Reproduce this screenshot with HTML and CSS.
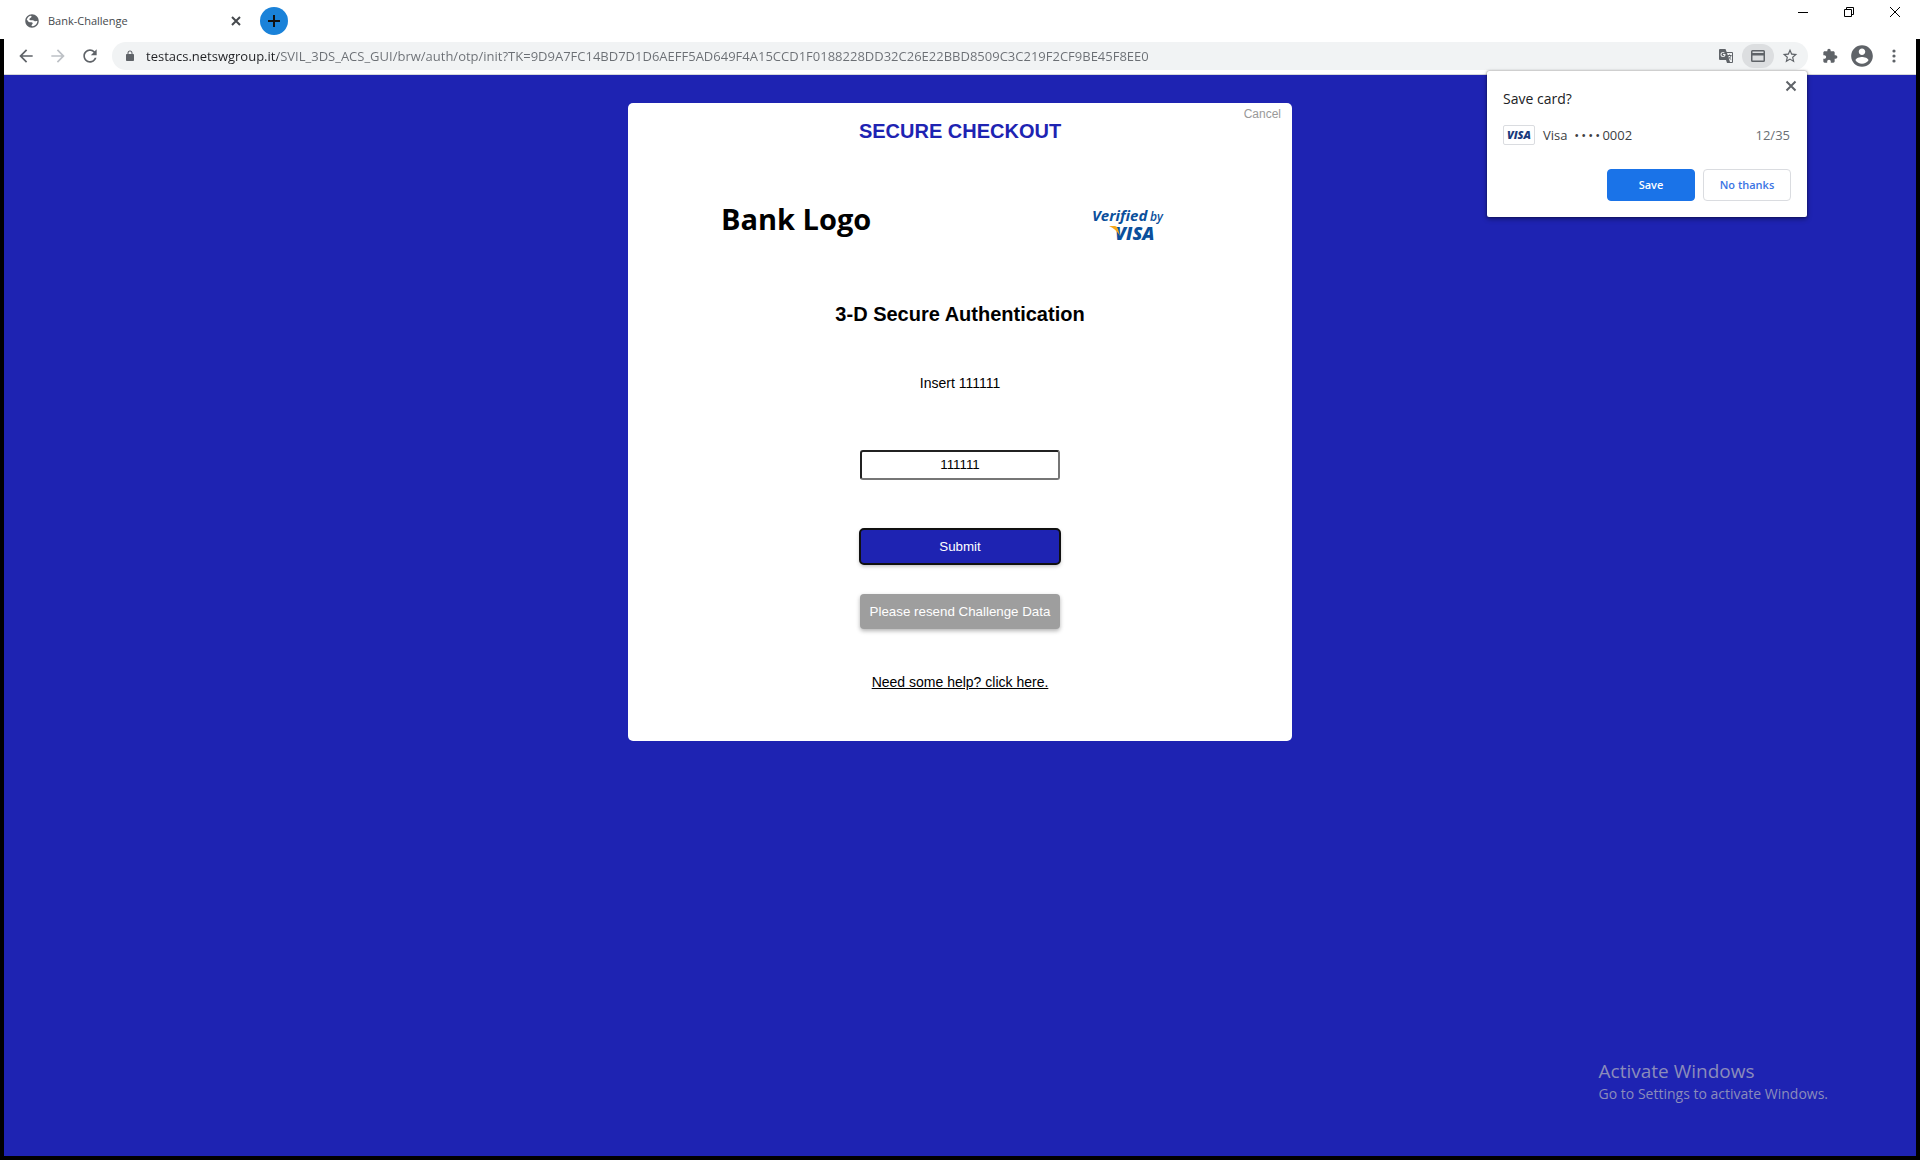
FILE: index.html
```html
<!DOCTYPE html>
<html lang="en">
<head>
<meta charset="utf-8">
<title>Bank-Challenge</title>
<link rel="stylesheet" href="styles.css">
</head>
<body>
<header class="browser">
  <div class="tabstrip">
    <div class="tab">
      <svg class="i18 grey" viewBox="0 0 24 24"><path d="M12 3C7 3 3 7 3 12s4 9 9 9 9-4 9-9-4-9-9-9zM5 10.500C5.600 7.700 7.500 5.700 10.200 5c1.500.3 1.600 1.300.8 2.100L9 8.700c-1 .8-.5 2.300 1 2.300h3c1.500 0 2.200 1.400 3.500 1.400 1.300 0 2.300-.6 2.700 0-.3 3.300-2.700 6-5.900 6.700-2.300.3-2.500-1.500-1-2.600 1.200-1 .6-2.700-1-2.700H9c-1.700 0-2.200-1.900-4-3.300z"/></svg>
      <span class="tab-title">Bank-Challenge</span>
      <button class="icon-btn" aria-label="Close tab"><svg class="i10" viewBox="0 0 10 10"><path class="line dark" d="M1 1l8 8M9 1l-8 8"/></svg></button>
    </div>
    <button class="new-tab" aria-label="New tab"><svg class="i12" viewBox="0 0 12 12"><path class="line" d="M6 0v12M0 6h12"/></svg></button>
    <div class="window-controls">
      <button class="icon-btn" aria-label="Minimize"><svg class="i10" viewBox="0 0 10 10"><path class="thin" d="M0 5.500h10"/></svg></button>
      <button class="icon-btn" aria-label="Restore"><svg class="i10" viewBox="0 0 10 10"><path class="thin" d="M.5 2.500h7v7h-7zM2.500 2.500v-2h7v7h-2"/></svg></button>
      <button class="icon-btn" aria-label="Close"><svg class="i10" viewBox="0 0 10 10"><path class="thin" d="M0 0l10 10M10 0L0 10"/></svg></button>
    </div>
  </div>
  <div class="toolbar">
    <div class="nav">
      <button class="icon-btn" aria-label="Back"><svg class="i20" viewBox="0 0 24 24"><path d="M20 11H7.830l5.590-5.590L12 4l-8 8 8 8 1.410-1.410L7.830 13H20v-2z"/></svg></button>
      <button class="icon-btn faded" aria-label="Forward"><svg class="i20" viewBox="0 0 24 24"><path d="M12 4l-1.410 1.410L16.170 11H4v2h12.170l-5.580 5.590L12 20l8-8z"/></svg></button>
      <button class="icon-btn" aria-label="Reload"><svg class="i20" viewBox="0 0 24 24"><path d="M17.650 6.350C16.200 4.900 14.210 4 12 4c-4.420 0-7.990 3.580-7.990 8s3.570 8 7.990 8c3.730 0 6.840-2.550 7.730-6h-2.080c-.82 2.330-3.040 4-5.650 4-3.310 0-6-2.690-6-6s2.690-6 6-6c1.660 0 3.140.69 4.220 1.780L13 11h7V4l-2.350 2.350z"/></svg></button>
    </div>
    <div class="omnibox">
      <svg class="i12" viewBox="0 0 24 24"><path d="M18 8h-1V6c0-2.760-2.240-5-5-5S7 3.240 7 6v2H6c-1.100 0-2 .9-2 2v10c0 1.100.9 2 2 2h12c1.100 0 2-.9 2-2V10c0-1.100-.9-2-2-2zM9 6c0-1.660 1.340-3 3-3s3 1.340 3 3v2H9V6z"/></svg>
      <input class="url" type="text" aria-label="Address" value="testacs.netswgroup.it/SVIL_3DS_ACS_GUI/brw/auth/otp/init?TK=9D9A7FC14BD7D1D6AEFF5AD649F4A15CCD1F0188228DD32C26E22BBD8509C3C219F2CF9BE45F8EE0">
      <button class="chip" aria-label="Translate"><svg class="i16" viewBox="0 0 16 16"><path d="M2 1h5.500l1.200 3H14a1 1 0 0 1 1 1v9a1 1 0 0 1-1 1H9l-1-3H2a1 1 0 0 1-1-1V2a1 1 0 0 1 1-1zm7 4l3 9h2V5zM5 4a2.500 2.500 0 1 0 2.500 2.500V6H5v1h1.400A1.500 1.500 0 1 1 6 5.400l.7-.7A2.500 2.500 0 0 0 5 4z" fill-rule="evenodd"/><path class="hair" d="M9.500 7.500h4M11.500 6.500v1M13 7.500c-.3 1.500-1.200 2.500-2.500 3.500M10.500 8.500c.8 1.500 1.600 2.300 2.700 3"/></svg></button>
      <button class="chip active" aria-label="Save card"><svg class="i16" viewBox="0 0 16 16"><path d="M2.500 2h11A1.500 1.500 0 0 1 15 3.500v9a1.500 1.500 0 0 1-1.500 1.500h-11A1.500 1.500 0 0 1 1 12.500v-9A1.500 1.500 0 0 1 2.500 2zm0 1.500V5h11V3.500zm0 4v5h11v-5z" fill-rule="evenodd"/></svg></button>
      <button class="chip" aria-label="Bookmark"><svg class="i16" viewBox="1 1 22 22"><path d="M22 9.240l-7.190-.62L12 2 9.190 8.630 2 9.240l5.460 4.730L5.820 21 12 17.270 18.180 21l-1.630-7.030L22 9.240zM12 15.400l-3.760 2.270 1-4.280-3.320-2.880 4.380-.38L12 6.100l1.710 4.040 4.380.38-3.320 2.880 1 4.280L12 15.400z"/></svg></button>
    </div>
    <div class="tools">
      <button class="icon-btn" aria-label="Extensions"><svg class="i16" viewBox="0 0 24 24"><path d="M20.500 11H19V7c0-1.100-.9-2-2-2h-4V3.500C13 2.120 11.880 1 10.500 1S8 2.120 8 3.500V5H4c-1.100 0-1.990.9-1.990 2v3.800H3.500c1.490 0 2.700 1.210 2.700 2.700s-1.210 2.700-2.700 2.700H2V20c0 1.100.9 2 2 2h3.800v-1.500c0-1.490 1.210-2.700 2.700-2.700 1.490 0 2.700 1.210 2.700 2.700V22H17c1.100 0 2-.9 2-2v-4h1.500c1.380 0 2.500-1.120 2.500-2.500S21.880 11 20.500 11z"/></svg></button>
      <button class="icon-btn" aria-label="Profile"><svg class="i26" viewBox="0 0 24 24"><path d="M12 2C6.480 2 2 6.480 2 12s4.480 10 10 10 10-4.480 10-10S17.520 2 12 2zm0 3c1.660 0 3 1.340 3 3s-1.340 3-3 3-3-1.340-3-3 1.340-3 3-3zm0 14.200c-2.500 0-4.710-1.280-6-3.220.03-1.990 4-3.080 6-3.080 1.990 0 5.970 1.090 6 3.080-1.290 1.940-3.500 3.220-6 3.220z"/></svg></button>
      <button class="icon-btn" aria-label="Menu"><svg class="i16" viewBox="0 0 16 16"><circle cx="8" cy="3" r="1.600"/><circle cx="8" cy="8" r="1.600"/><circle cx="8" cy="13" r="1.600"/></svg></button>
    </div>
    <section class="popup" aria-label="Save card?">
      <button class="icon-btn popup-close" aria-label="Dismiss"><svg class="i12" viewBox="0 0 12 12"><path class="line mid" d="M1.500 1.500l9 9M10.500 1.500l-9 9"/></svg></button>
      <h2 class="popup-title">Save card?</h2>
      <div class="card-row">
        <span class="visa-badge">VISA</span>
        <span>Visa&nbsp; •&thinsp;•&thinsp;•&thinsp;•&thinsp;0002</span>
        <span class="expiry">12/35</span>
      </div>
      <div class="popup-actions">
        <button class="btn primary">Save</button>
        <button class="btn outline">No thanks</button>
      </div>
    </section>
  </div>
</header>
<main class="page">
  <form class="checkout">
    <a class="cancel" href="#">Cancel</a>
    <h1 class="heading brand">SECURE CHECKOUT</h1>
    <div class="logos">
      <span class="bank-logo">Bank Logo</span>
      <svg class="vbv" viewBox="0 0 76 46" role="img" aria-label="Verified by VISA">
        <text class="vbv-word" x="1" y="22">Verified</text>
        <text class="vbv-by" x="59" y="22">by</text>
        <text class="vbv-visa" x="24" y="41">VISA</text>
        <path class="vbv-flick" d="M18 27h6q2 0 3 3l2 7q-4-7-11-10z"/>
      </svg>
    </div>
    <h2 class="heading">3-D Secure Authentication</h2>
    <label class="message" for="otp">Insert 111111</label>
    <input class="otp" id="otp" type="text" value="111111">
    <button class="action submit" type="button">Submit</button>
    <button class="action resend" type="button">Please resend Challenge Data</button>
    <a class="help" href="#">Need some help? click here.</a>
  </form>
</main>
<aside class="watermark">
  <p class="wm-title">Activate Windows</p>
  <p class="wm-text">Go to Settings to activate Windows.</p>
</aside>
</body>
</html>
```
FILE: styles.css
```css
* { box-sizing: border-box; }
body {
  margin: 0;
  min-height: 100vh;
  display: flex;
  flex-direction: column;
  position: relative;
  background: #000;
  font-family: "Open Sans", "Noto Sans", sans-serif;
  color: #202124;
}
h1, h2, p { margin: 0; font-weight: normal; }
button { cursor: pointer; }
svg { display: block; flex: none; fill: currentColor; }

.i10 { width: 10px; height: 10px; }
.i12 { width: 12px; height: 12px; }
.i16 { width: 16px; height: 16px; }
.i18 { width: 18px; height: 18px; }
.i20 { width: 20px; height: 20px; }
.i26 { width: 26px; height: 26px; }
.grey { color: #5f6368; }
.line { fill: none; stroke: #111; stroke-width: 2; }
.dark { stroke: #45494d; }
.mid { stroke: #5f6368; }
.thin { fill: none; stroke: #000; }
.hair { fill: none; stroke: currentColor; }

.icon-btn {
  display: grid;
  place-items: center;
  padding: 0;
  border: 0;
  background: none;
  color: inherit;
}
.faded { color: #bdc1c6; }

/* Browser chrome */
.tabstrip {
  display: flex;
  align-items: flex-start;
  height: 39px;
  padding: 0 20px 0 23px;
  background: #fff;
}
.tab {
  display: flex;
  align-items: center;
  width: 218px;
  height: 42px;
  gap: 7px;
}
.tab-title { flex: 1; font-size: 11px; line-height: 16px; color: #45494d; }
.new-tab {
  display: grid;
  place-items: center;
  width: 28px;
  height: 28px;
  margin: 7px 0 0 19px;
  padding: 0;
  border: 0;
  border-radius: 50%;
  background: #1a82d9;
}
.window-controls {
  display: flex;
  gap: 36px;
  margin: 7px 0 0 auto;
}
.toolbar {
  position: relative;
  display: flex;
  align-items: center;
  height: 36px;
  margin: 0 4px;
  padding: 0 14px 1px 12px;
  border-bottom: 1px solid #d5d7da;
  background: #fff;
  color: #5f6368;
}
.nav { display: flex; gap: 12px; margin-right: 12px; }
.omnibox {
  flex: 1;
  display: flex;
  align-items: center;
  height: 28px;
  padding: 0 2px 0 12px;
  border-radius: 14px;
  background: #f1f3f4;
}
.url {
  flex: 1;
  min-width: 0;
  margin-left: 10px;
  padding: 0;
  border: 0;
  outline: 0;
  font: 13px/20px "Open Sans", "Noto Sans", sans-serif;
  color: transparent;
  background: linear-gradient(90deg, #202124 132px, #6b6f74 132px);
  -webkit-background-clip: text;
  background-clip: text;
}
.chip {
  display: grid;
  place-items: center;
  width: 32px;
  height: 24px;
  padding: 0;
  border: 0;
  border-radius: 12px;
  background: none;
  color: #5f6368;
}
.active { background: #dcdee0; }
.tools { display: flex; align-items: center; gap: 11px; margin-left: 14px; }

/* Save card bubble */
.popup {
  position: absolute;
  z-index: 2;
  top: 32px;
  right: 109px;
  width: 320px;
  padding: 16px;
  border-radius: 2px;
  background: #fff;
  color: #3c4043;
  box-shadow: 0 0 2px rgba(0, 0, 0, .5), 0 2px 5px rgba(0, 0, 0, .4);
}
.popup-close { position: absolute; top: 9px; right: 10px; }
.popup-title { font-size: 14px; line-height: 24px; color: #202124; }
.card-row {
  display: flex;
  align-items: center;
  gap: 8px;
  margin-top: 14px;
  font-size: 13px;
  line-height: 20px;
}
.visa-badge {
  width: 32px;
  height: 20px;
  border: 1px solid #dadce0;
  border-radius: 2px;
  font-size: 11px;
  line-height: 18px;
  font-weight: 800;
  font-style: italic;
  text-align: center;
  color: #1a3a7c;
}
.expiry { margin-left: auto; padding-right: 1px; color: #6b6f74; }
.popup-actions {
  display: flex;
  justify-content: flex-end;
  gap: 8px;
  margin-top: 24px;
}
.btn {
  width: 88px;
  height: 32px;
  padding: 0 0 1px;
  border: 1px solid #1a73e8;
  border-radius: 4px;
  font: 600 11px/16px "Open Sans", "Noto Sans", sans-serif;
}
.primary { background: #1a73e8; color: #fff; }
.outline { border-color: #dadce0; background: #fff; color: #3b74e4; }

/* Challenge page */
.page {
  flex: 1;
  margin: 0 4px 4px;
  padding: 28px 20px;
  background: #1e23b2;
  font-family: "Liberation Sans", Arial, sans-serif;
}
.checkout {
  position: relative;
  display: flex;
  flex-direction: column;
  align-items: center;
  max-width: 664px;
  margin: 0 auto;
  padding: 16px 24px 49px;
  border-radius: 5px;
  background: #fff;
  color: #000;
  font-size: 14px;
  line-height: 20px;
}
.cancel {
  position: absolute;
  top: 1px;
  right: 11px;
  font-size: 12px;
  color: #999;
  text-decoration: none;
}
.heading { font-size: 20px; line-height: 24px; font-weight: bold; }
.brand { color: #1e23b2; }
.logos {
  display: flex;
  justify-content: space-between;
  align-items: flex-start;
  align-self: stretch;
  margin: 56px 101px 57px 69px;
}
.bank-logo {
  font: bold 29px/40px "Open Sans", "Noto Sans", sans-serif;
}
.vbv {
  width: 76px;
  height: 46px;
  fill: #0a4f9c;
  font-family: "Open Sans", "Noto Sans", sans-serif;
  font-style: italic;
}
.vbv-word { font-size: 15px; font-weight: 700; }
.vbv-by { font-size: 12px; font-weight: 600; }
.vbv-visa { font-size: 18px; font-weight: 800; }
.vbv-flick { fill: #f7a81b; }
.message { margin: 47px 0 57px; }
.otp,
.action {
  width: 200px;
  font-family: "Liberation Sans", Arial, sans-serif;
}
.otp {
  height: 30px;
  margin-bottom: 49px;
  padding: 0 0 2px;
  border: 2px inset #767676;
  border-radius: 3px;
  text-align: center;
  color: #000;
}
.action {
  height: 35px;
  padding: 0;
  border: 0;
  border-radius: 4px;
  color: #fff;
  box-shadow: 0 2px 4px rgba(0, 0, 0, .3);
}
.submit {
  margin-bottom: 30px;
  background: #1e23b2;
  outline: 2px solid #101010;
  outline-offset: -1px;
}
.resend { margin-bottom: 43px; background: #9e9e9e; }
.help { color: #000; }

.watermark {
  position: absolute;
  right: 92px;
  bottom: 55px;
  color: #8b8cbb;
}
.wm-title { font-size: 19px; line-height: 24px; }
.wm-text { font-size: 14px; line-height: 22px; }
```
